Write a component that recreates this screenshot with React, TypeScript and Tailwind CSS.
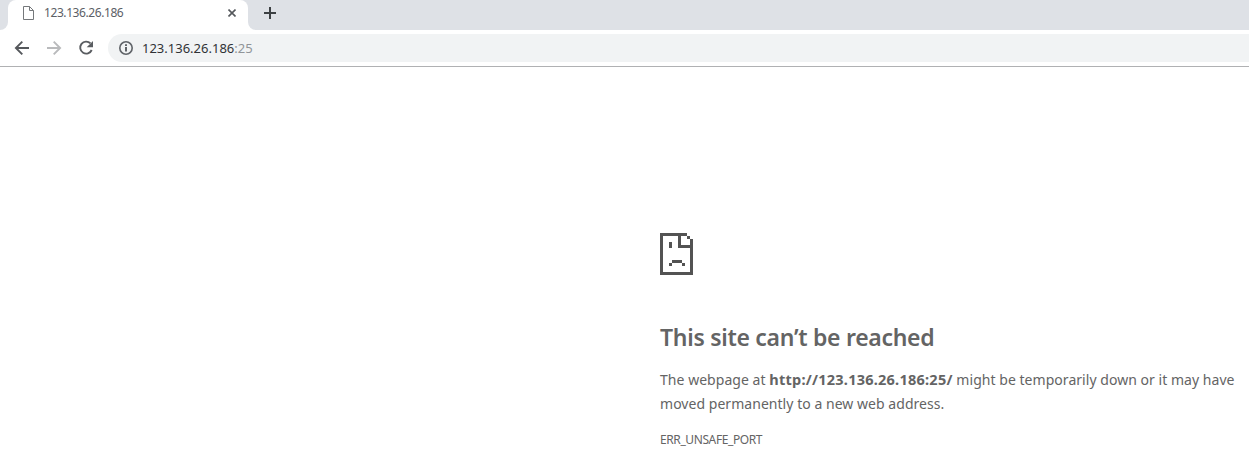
import React from "react";

const page = "font-['Noto_Sans','Open_Sans',sans-serif]";

function TabStrip() {
  return (
    <div className="flex h-[30px] bg-[#dee1e6]">
      <div className="w-2 bg-white">
        <div className="h-full rounded-br-lg bg-[#dee1e6]" />
      </div>
      <div className="flex w-[240px] items-start rounded-t-lg bg-white">
        <svg className="ml-[15px] mt-[6px] h-[14px] w-[11px]" viewBox="0 0 11 14" fill="none" stroke="#75787b">
          <path d="M.5.5h6l4 4v9H.5zM6.5.5v4h4" />
        </svg>
        <span className="ml-[10px] mt-[5px] w-[184px] whitespace-nowrap text-[12px] leading-4 tracking-[-0.42px] text-[#5c6066]">
          123.136.26.186
        </span>
        <svg className="mt-[9px] h-2 w-2" viewBox="0 0 8 8" stroke="#55585c" strokeWidth="1.6">
          <path d="M.5.5l7 7M7.5.5l-7 7" />
        </svg>
      </div>
      <div className="flex-1 bg-white">
        <div className="h-full rounded-bl-lg bg-[#dee1e6] pl-4 pt-[7px]">
          <svg className="h-3 w-3" viewBox="0 0 12 12" stroke="#3c4043" strokeWidth="2">
            <path d="M6 0v12M0 6h12" />
          </svg>
        </div>
      </div>
    </div>
  );
}

function Toolbar() {
  return (
    <div className="flex h-[37px] items-center border-b border-[#b0b1b3] bg-white">
      <svg className="ml-[14px] h-4 w-4" viewBox="0 0 16 16" fill="none" stroke="#55585c" strokeWidth="1.9">
        <path d="M15 8H2M8.3 1.6L1.9 8l6.4 6.4" />
      </svg>
      <svg className="ml-4 h-4 w-4" viewBox="0 0 16 16" fill="none" stroke="#b9babc" strokeWidth="1.9">
        <path d="M1 8h13M7.7 1.6L14.1 8l-6.4 6.4" />
      </svg>
      <svg className="ml-4 h-4 w-4" viewBox="0 0 16 16">
        <path fill="none" stroke="#5a5d61" strokeWidth="1.9" d="M12.5 3.4A6 6 0 1 0 13.7 10" />
        <path fill="#5a5d61" d="M15 1v6.3H8.7z" />
      </svg>
      <div className="ml-[14px] flex h-7 flex-1 items-center rounded-l-full bg-[#f1f3f4] pl-[11px]">
        <svg className="h-[14px] w-[14px]" viewBox="0 0 14 14" fill="none" stroke="#5f6368" strokeWidth="1.6">
          <circle cx="7" cy="7" r="6.2" />
          <path d="M7 6v4.5M7 3.3V5" strokeWidth="2" />
        </svg>
        <span className="ml-[9px] whitespace-nowrap text-[13px] leading-5 text-[#303236]">
          123.136.26.186<span className="text-[#909498]">:25</span>
        </span>
      </div>
    </div>
  );
}

function SadPage() {
  return (
    <svg className="h-[42px] w-[33px]" viewBox="0 0 33 42" fill="#535353" shapeRendering="crispEdges">
      <path
        fillRule="evenodd"
        d="M0 0h27v3h-6v9h9V6h3v36H0zM3 3v36h27V15H18V3zM27 3h3v3h-3zM9 9h3v6H9zM12 27h10v3H12zM9 30h3v3H9zM22 30h3v3h-3z"
      />
    </svg>
  );
}

export default function App() {
  return (
    <div className={`${page} h-[472px] overflow-hidden bg-white text-[#646464]`}>
      <TabStrip />
      <Toolbar />
      <main className="ml-[660px] pt-[166px]">
        <SadPage />
        <h1 className="mt-[46px] whitespace-nowrap text-[23px] font-semibold leading-8 tracking-[-0.29px]">
          This site can’t be reached
        </h1>
        <p className="mt-[14px] whitespace-nowrap text-[14px] leading-6 tracking-[0.04px]">
          The webpage at <b className="text-[14.5px] tracking-[0.24px]">http://123.136.26.186:25/</b> might be temporarily down or it may have
          <br />
          moved permanently to a new web address.
        </p>
        <div className="mt-4 text-[12px] leading-4 tracking-[-0.4px]">ERR_UNSAFE_PORT</div>
      </main>
    </div>
  );
}
